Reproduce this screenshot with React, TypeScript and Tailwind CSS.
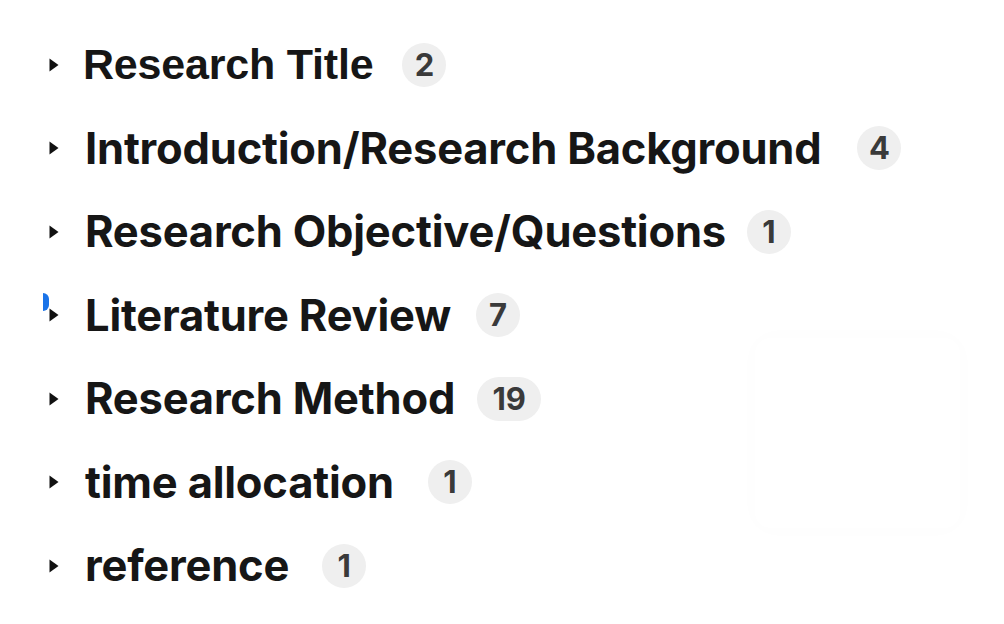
import React from "react";

type Section = {
  title: string;
  count: number;
  gap: string;
  font: string;
};

const sections: Section[] = [
  { title: "Research Title", count: 2, gap: "ml-[29px]", font: "[font-family:'Liberation_Sans',Arial,sans-serif] text-[43px]" },
  { title: "Introduction/Research Background", count: 4, gap: "ml-[36px]", font: "[font-family:Inter,sans-serif] text-[43.5px]" },
  { title: "Research Objective/Questions", count: 1, gap: "ml-[21px]", font: "[font-family:Inter,sans-serif] text-[43.5px]" },
  { title: "Literature Review", count: 7, gap: "ml-[25px]", font: "[font-family:Inter,sans-serif] text-[43.5px]" },
  { title: "Research Method", count: 19, gap: "ml-[22px]", font: "[font-family:Inter,sans-serif] text-[43.5px]" },
  { title: "time allocation", count: 1, gap: "ml-[34px]", font: "[font-family:Inter,sans-serif] text-[43.5px]" },
  { title: "reference", count: 1, gap: "ml-[33px]", font: "[font-family:Inter,sans-serif] text-[43.5px]" },
];

function Caret() {
  return (
    <svg width="12" height="16" viewBox="0 0 12 16" className="shrink-0">
      <path d="M1.5 1.5 L10.5 8 L1.5 14.5 Z" fill="#111" />
    </svg>
  );
}

export default function App() {
  return (
    <div className="relative w-[1004px] h-[624px] bg-white overflow-hidden">
      {/* faint floating card on the right */}
      <div className="absolute left-[755px] top-[338px] w-[205px] h-[190px] rounded-2xl shadow-[0_0_24px_rgba(0,0,0,0.015)]" />

      <ul className="flex flex-col pt-[23px] pl-[48px]">
        {sections.map((s, i) => (
          <li key={s.title} className="relative flex items-center h-[83.5px]">
            {i === 3 && (
              <span className="absolute left-[-5px] top-[19px] w-[6px] h-[18px] rounded-r-full bg-[#1a73e8]" />
            )}
            <Caret />
            <span
              className={`${s.font} ${i === 0 ? "ml-[23px]" : "ml-[25px]"} font-bold text-[#161616] leading-none tracking-[-0.2px] whitespace-nowrap`}
            >
              {s.title}
            </span>
            <span
              className={`${s.gap} flex items-center justify-center h-[44px] ${s.count > 9 ? "px-[10px] min-w-[64px]" : "w-[44px]"} rounded-full bg-[#efefef] text-[#3a3a3a] text-[31px] font-bold [font-family:Inter,sans-serif]`}
            >
              {s.count}
            </span>
          </li>
        ))}
      </ul>
    </div>
  );
}
